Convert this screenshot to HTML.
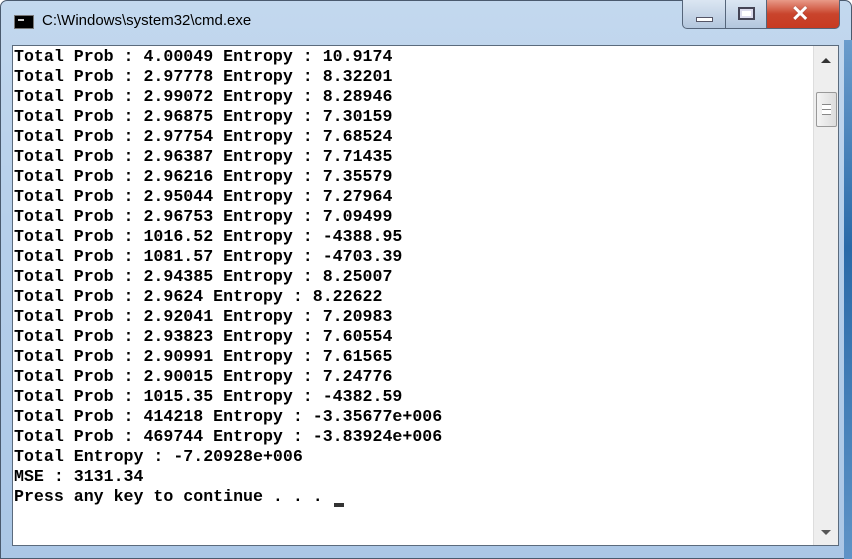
<!DOCTYPE html>
<html><head><style>
*{margin:0;padding:0;box-sizing:border-box}
body{width:852px;height:559px;overflow:hidden;background:#fff;position:relative;font-family:"Liberation Sans",sans-serif}
.win{position:absolute;left:0;top:0;width:852px;height:559px;background:linear-gradient(180deg,#c3d8ee 0%,#b6cfea 40%,#abc7e6 100%);border:1px solid #4a5a6e;border-radius:7px 7px 0 0}
.edge{position:absolute;right:0;top:40px;width:8px;height:519px;background:linear-gradient(180deg,#6a9ccc,#2a6aa8 40%,#5e93c6)}
.title{position:absolute;left:42px;top:12px;font-size:15px;color:#000}
.icon{position:absolute;left:14px;top:15px;width:20px;height:14px;background:#000;border:1px solid #777}
.icon:after{content:"";position:absolute;left:3px;top:3px;width:6px;height:2px;background:#ccc}
.btn{position:absolute;top:0;height:29px;border:1px solid #55657a;border-top:none}
.min{left:682px;width:44px;background:linear-gradient(#dbe6f2,#b3c6dd);border-radius:0 0 0 5px}
.max{left:725px;width:42px;background:linear-gradient(#dbe6f2,#b3c6dd)}
.cls{left:766px;width:74px;background:linear-gradient(#e89a88,#c9442c 50%,#c73a22);border-radius:0 0 5px 0}
.content{position:absolute;left:12px;top:45px;width:827px;height:501px;background:#fff;border:1px solid #5b6b7d}
.sb{position:absolute;right:0;top:0;width:25px;height:100%;background:#eeeeee;border-left:1px solid #ddd}
.thumb{position:absolute;left:2px;top:46px;width:21px;height:35px;background:linear-gradient(90deg,#f4f4f4,#dcdcdc);border:1px solid #999;border-radius:2px}
pre{position:absolute;left:1px;top:1px;font-family:"Liberation Mono",monospace;font-weight:bold;font-size:16.6px;line-height:20px;color:#000}
</style></head><body>
<div class="win"></div>
<div class="edge"></div>
<div class="icon"></div>
<div class="title">C:\Windows\system32\cmd.exe</div>
<div class="btn min"><div style="position:absolute;left:13px;top:17px;width:17px;height:5px;background:#fff;border:1px solid #556"></div></div>
<div class="btn max"><div style="position:absolute;left:12px;top:7px;width:17px;height:13px;border:2px solid #445;background:#fff;box-shadow:inset 0 0 0 2px #dde"></div></div>
<div class="btn cls"><div style="position:absolute;left:24px;top:1px;color:#fff;font-size:22px;font-weight:bold;text-shadow:0 0 1px #733">✕</div></div>
<div class="content">
<pre>Total Prob : 4.00049 Entropy : 10.9174
Total Prob : 2.97778 Entropy : 8.32201
Total Prob : 2.99072 Entropy : 8.28946
Total Prob : 2.96875 Entropy : 7.30159
Total Prob : 2.97754 Entropy : 7.68524
Total Prob : 2.96387 Entropy : 7.71435
Total Prob : 2.96216 Entropy : 7.35579
Total Prob : 2.95044 Entropy : 7.27964
Total Prob : 2.96753 Entropy : 7.09499
Total Prob : 1016.52 Entropy : -4388.95
Total Prob : 1081.57 Entropy : -4703.39
Total Prob : 2.94385 Entropy : 8.25007
Total Prob : 2.9624 Entropy : 8.22622
Total Prob : 2.92041 Entropy : 7.20983
Total Prob : 2.93823 Entropy : 7.60554
Total Prob : 2.90991 Entropy : 7.61565
Total Prob : 2.90015 Entropy : 7.24776
Total Prob : 1015.35 Entropy : -4382.59
Total Prob : 414218 Entropy : -3.35677e+006
Total Prob : 469744 Entropy : -3.83924e+006
Total Entropy : -7.20928e+006
MSE : 3131.34
Press any key to continue . . . </pre>
<div style="position:absolute;left:321px;top:457px;width:10px;height:4px;background:#333"></div>
<div class="sb">
<div style="position:absolute;left:7px;top:12px;width:0;height:0;border-left:5px solid transparent;border-right:5px solid transparent;border-bottom:5px solid #333"></div>
<div class="thumb"><div style="position:absolute;left:5px;top:11px;width:9px;height:11px;border-top:1px solid #888;border-bottom:1px solid #888;background:linear-gradient(#fff 0 4px,#888 4px 5px,#fff 5px)"></div></div>
<div style="position:absolute;left:7px;bottom:10px;width:0;height:0;border-left:5px solid transparent;border-right:5px solid transparent;border-top:5px solid #555"></div>
</div>
</div>
</body></html>
